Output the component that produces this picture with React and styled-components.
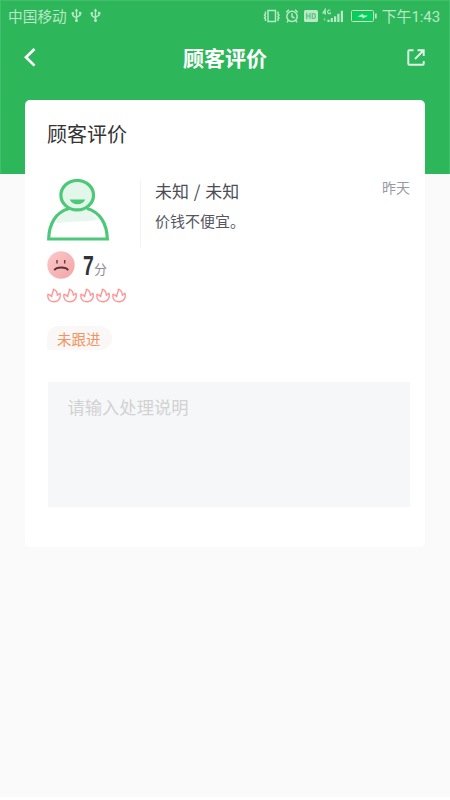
import styled, { createGlobalStyle } from 'styled-components';

const App = () => {

    return (
        <Page>
            <GlobalStyle />
            <Header>
                <StatusBar>
                    <Carrier>中国移动</Carrier>
                    <UsbIcon />
                    <UsbIcon />
                    <Spacer />
                    <StatusIcons />
                    <Clock>下午1:43</Clock>
                </StatusBar>
                <NavBar>
                    <BackIcon />
                    <h1>顾客评价</h1>
                    <ShareIcon />
                </NavBar>
            </Header>

            <Card>
                <h2>顾客评价</h2>
                <Review>
                    <AvatarIcon />
                    <Detail>
                        <Name>未知 / 未知</Name>
                        <Comment>价钱不便宜。</Comment>
                    </Detail>
                    <Day>昨天</Day>
                </Review>
                <Score>
                    <SadFace />
                    <Points>7</Points>
                    <Unit>分</Unit>
                </Score>
                <Flames>
                    {[1, 2, 3, 4, 5].map((n) => <FlameIcon key={n} />)}
                </Flames>
                <Tag>未跟进</Tag>
                <Note placeholder="请输入处理说明" />
            </Card>
        </Page>
    )
}

export default App

const UsbIcon = () => (
    <svg width="11" height="15" viewBox="0 0 11 15" fill="none" stroke="#b9e8c6" strokeWidth="1.4">
        <path d="M5.5 2v10M1.8 5.5v2.2l3.7 2.4M9.2 5v2.2L5.5 9.4" />
        <path d="M5.5 0.5L7.4 3.3H3.6z" fill="#b9e8c6" stroke="none" />
        <circle cx="5.5" cy="12.6" r="1.5" fill="#b9e8c6" stroke="none" />
        <circle cx="1.8" cy="5.4" r="1.3" fill="#b9e8c6" stroke="none" />
        <path d="M8 3.9h2.400v2.400H8z" fill="#b9e8c6" stroke="none" />
    </svg>
)

const StatusIcons = () => (
    <svg width="115" height="16" viewBox="0 0 115 16" fill="none" stroke="#b9e8c6" strokeWidth="1.5">
        {/* vibrate */}
        <rect x="5" y="2.5" width="7.500" height="11" />
        <path d="M2.500 3.500v2.500l-1 1 1 1.500-1 1.500 1 1v2M15 3.500v2.500l1 1-1 1.500 1 1.500-1 1v2" />
        {/* alarm */}
        <circle cx="29" cy="8.400" r="5.200" />
        <path d="M29 5.200v3.500l2.500 1.300M23.200 4.200l2.800-2.500M34.800 4.200l-2.800-2.500M25.400 12.600l-1.500 1.700M32.600 12.600l1.500 1.700" />
        {/* HD */}
        <rect x="41" y="2" width="14" height="12" rx="1.500" fill="#b9e8c6" stroke="none" />
        <path d="M43.700 5v6M47 5v6M43.700 8H47M49.300 5.600v4.800h1.200q1.900 0 1.900-2.400t-1.900-2.400z" stroke="#62c781" strokeWidth="1.300" />
        {/* 4G signal */}
        <path d="M62.200 6.700V1.500L60 5h3M67.300 2.300q-2.600-1-2.600 1.500t2.600 1.800V4.200" strokeWidth="1.200" />
        <path d="M61.500 9.500v3M60.200 11l1.300 1.800 1.300-1.800" stroke="#67cc85" strokeWidth="1" />
        <path d="M65.500 14v-2.300M68.800 14v-4M72.100 14V8.200M75.400 14V5.700M78.900 14V2.700" strokeWidth="2.200" />
        {/* battery */}
        <rect x="88.500" y="2.500" width="22" height="11" rx="1" strokeWidth="1" />
        <rect x="90" y="4" width="19" height="8" fill="#00d35b" stroke="none" />
        <path d="M94.500 8.500l5.500-2.800v1.600l5 .5-5.500 2.800V9z" fill="#d5f5df" stroke="none" />
        <path d="M112.800 5.500v5" strokeWidth="1.800" />
    </svg>
)

const BackIcon = () => (
    <svg width="12" height="20" viewBox="0 0 12 20" fill="none" stroke="#fff" strokeWidth="2.700">
        <path d="M10.500 1L2 9.300l8.500 8.300" />
    </svg>
)

const ShareIcon = () => (
    <svg width="18" height="18" viewBox="0 0 18 18" fill="none" stroke="#e4f7e9" strokeWidth="1.900">
        <path d="M6.500 1.300H2.300q-1 0-1 1v12.400q0 1 1 1h13.400q1 0 1-1V12" />
        <path d="M10.500 1.300h6.200v5.700M16.300 1.700L8 10" />
    </svg>
)

const AvatarIcon = () => (
    <svg width="62" height="62" viewBox="0 0 62 62" fill="none">
        <path d="M10 40Q18 32 25 29.500h12Q45 33 50.500 40.500Q45 42 35 42.300T10 44z" fill="#e7f7ed" />
        <path d="M22 29.500C9 33 2 45 1.700 60h58.600C60 45 53 33 40 29.500" stroke="#4bc878" strokeWidth="3.200" />
        <ellipse cx="30.200" cy="16.200" rx="16.300" ry="14.700" fill="#e2f6e9" stroke="#4bc878" strokeWidth="3.200" />
        <path d="M22.700 20.500h15.600Q36 25.200 30.500 25.200T22.700 20.500z" fill="#4bc878" />
    </svg>
)

const SadFace = () => (
    <svg width="28" height="28" viewBox="0 0 28 28" fill="none">
        <defs>
            <linearGradient id="face" x1="0" y1="0" x2="1" y2="1">
                <stop offset="0" stopColor="#fbc9c9" />
                <stop offset="1" stopColor="#f3a4a6" />
            </linearGradient>
        </defs>
        <circle cx="14" cy="14" r="13.700" fill="url(#face)" />
        <path d="M10 9v3.500M17.700 9v3.500" stroke="#6b4144" strokeWidth="1.500" />
        <path d="M7.300 19.200Q9 16.500 14.200 16.500t7 2.700" stroke="#543235" strokeWidth="1.800" />
    </svg>
)

const FlameIcon = () => (
    <svg width="14" height="15" viewBox="0 0 14 15" fill="none" stroke="#ff9695" strokeWidth="1.400" strokeLinejoin="round">
        <path d="M1 6.300C.2 10.500 2.200 13.800 7 13.800 11.800 13.800 14 9.800 13 5.300L10.300 7.300C10.400 4.300 9 2.200 6.300 1.200 6.800 3.800 4.800 5 4.700 8.700 3.700 7.200 2.300 6.500 1 6.300z" />
    </svg>
)

const GlobalStyle = createGlobalStyle`
    body {
        margin: 0;
        background: #fafafa;
    }

    * {
        box-sizing: border-box;
    }
`;

const Page = styled.div`
    height: 800px;
    background: #fafafa;
    border-bottom: 3px solid #fff;
    font-family: "Noto Sans CJK SC", sans-serif;
    overflow: hidden;

svg {
    flex-shrink: 0;
    display: block;
}
`;

const Header = styled.div`
    height: 174px;
    background: #2db75a;
    border: 1px solid #42bf6b;
    border-bottom: 0;
`;

const StatusBar = styled.div`
    display: flex;
    align-items: center;
    height: 29px;
    padding: 0 9px 0 7px;
    color: #b9e8c6;

svg + svg {
    margin-left: 8px;
}
`;

const Carrier = styled.span`
    font-size: 14.700px;
    margin-top: -1px;
    margin-right: 4px;
`;

const Spacer = styled.span`
    flex: 1;
`;

const Clock = styled.span`
    font-family: Roboto, "Noto Sans CJK SC", sans-serif;
    font-size: 15px;
    letter-spacing: -0.100px;
    margin-top: -1px;
    margin-left: 4px;
    white-space: nowrap;
`;

const NavBar = styled.div`
    display: flex;
    align-items: center;
    justify-content: space-between;
    height: 55px;
    padding: 0 24px 0 23px;

h1 {
    margin: -2px 0 0;
    padding-left: 7px;
    color: #fff;
    font-size: 21px;
    font-weight: 700;
}
`;

const Card = styled.div`
    width: 400px;
    height: 447px;
    margin: -74px auto 0;
    padding: 19px 15px 0 22px;
    background: #fff;
    border-radius: 5px;

h2 {
    margin: 0;
    color: #333;
    font-size: 20px;
    font-weight: 400;
    line-height: 30px;
}
`;

const Review = styled.div`
    display: flex;
    height: 66px;
    margin-top: 30px;
`;

const Detail = styled.div`
    flex: 1;
    height: 67px;
    margin: 1px 0 0 31px;
    padding-left: 14px;
    border-left: 1px solid #f3f3f4;
`;

const Name = styled.div`
    color: #4b4d55;
    font-size: 17px;
    line-height: 22px;
    word-spacing: 1px;
`;

const Comment = styled.div`
    margin-top: 9px;
    color: #55575f;
    font-size: 15px;
    line-height: 20px;
`;

const Day = styled.span`
    margin-top: -1px;
    color: #9899a3;
    font-size: 14px;
    line-height: 18px;
`;

const Score = styled.div`
    display: flex;
    align-items: center;
    height: 28px;
    margin-top: 6px;
`;

const Points = styled.span`
    margin-top: 1px;
    margin-left: 6px;
    color: #2f323b;
    font-family: "Liberation Sans", sans-serif;
    font-size: 27px;
    font-weight: 700;
    line-height: 28px;
    transform: scaleX(0.72);
`;

const Unit = styled.span`
    margin-top: 8px;
    margin-left: -2px;
    color: #8b8d96;
    font-size: 13px;
    line-height: 18px;
`;

const Flames = styled.div`
    display: flex;
    gap: 2.300px;
    margin-top: 9px;
`;

const Tag = styled.div`
    width: 65px;
    height: 24px;
    margin-top: 23px;
    padding-left: 10px;
    background: #faf8f7;
    border-radius: 12px 12px 12px 0;
    color: #f5935f;
    font-size: 14.500px;
    line-height: 26px;
`;

const Note = styled.textarea`
    display: block;
    width: 362px;
    height: 125px;
    margin-top: 32px;
    margin-left: 0.500px;
    padding: 12px 20px;
    border: 0;
    background: #f6f7f9;
    font-family: inherit;
    font-size: 17.300px;
    line-height: 25px;
    resize: none;

&::placeholder {
    color: #d2d2d2;
}
`;
